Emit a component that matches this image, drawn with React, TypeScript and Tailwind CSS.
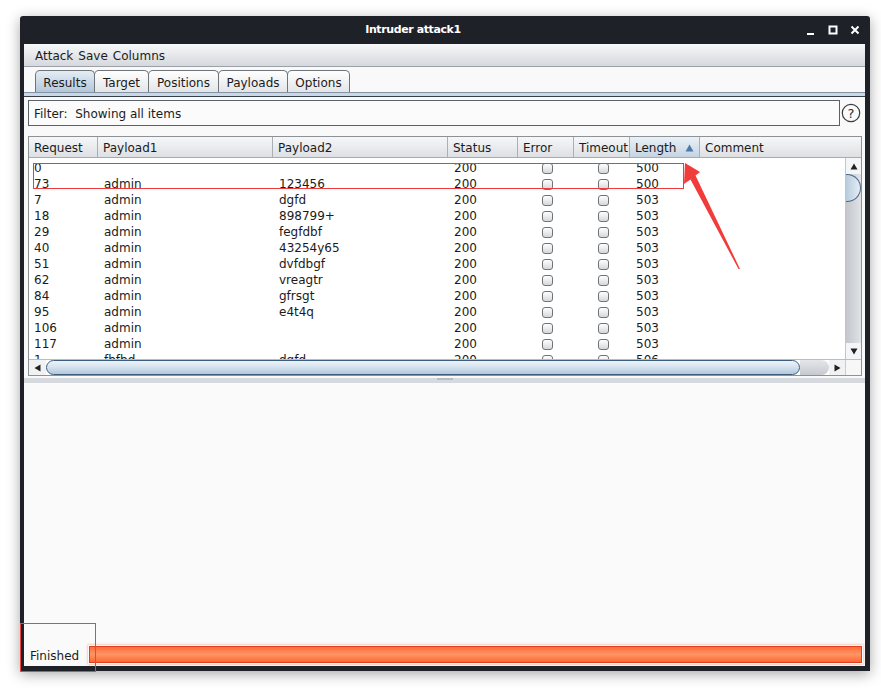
import React from "react";

const rows: [string, string, string, string, string][] = [
  ["0", "", "", "200", "500"],
  ["73", "admin", "123456", "200", "500"],
  ["7", "admin", "dgfd", "200", "503"],
  ["18", "admin", "898799+", "200", "503"],
  ["29", "admin", "fegfdbf", "200", "503"],
  ["40", "admin", "43254y65", "200", "503"],
  ["51", "admin", "dvfdbgf", "200", "503"],
  ["62", "admin", "vreagtr", "200", "503"],
  ["84", "admin", "gfrsgt", "200", "503"],
  ["95", "admin", "e4t4q", "200", "503"],
  ["106", "admin", "", "200", "503"],
  ["117", "admin", "", "200", "503"],
  ["1", "fbfbd", "dgfd", "200", "506"],
];

const tabs = [
  { label: "Results", w: "w-[60px]", active: true },
  { label: "Target", w: "w-[55px]" },
  { label: "Positions", w: "w-[71px]" },
  { label: "Payloads", w: "w-[70px]" },
  { label: "Options", w: "w-[63px]" },
];

function Check() {
  return (
    <span className="block h-[11px] w-[11px] rounded-[3px] border border-[#6f737a] bg-gradient-to-b from-white to-[#d5d8dc]" />
  );
}

export default function App() {
  return (
    <div className="relative h-[688px] w-[881px] overflow-hidden bg-white font-['DejaVu_Sans',sans-serif] text-[12px] text-[#1b1b1b]">
      <div className="pl-[20px] pt-[16px]">
        <div className="flex h-[655px] w-[850px] flex-col rounded-t-[3px] bg-[#1f2129] shadow-[0_3px_14px_rgba(0,0,0,0.35)]">
          {/* title bar */}
          <div className="flex h-[28px] items-center">
            <div className="flex-1 pt-[1px] text-center text-[11px] font-bold tracking-[-0.4px] text-white">Intruder attack1</div>
            <div className="flex items-center gap-[12px] pr-[10px] text-white">
              <svg width="10" height="10" viewBox="0 0 10 10"><rect x="1" y="8" width="7" height="2" fill="white" /></svg>
              <svg width="10" height="10" viewBox="0 0 10 10"><rect x="1.5" y="1.5" width="7" height="7" fill="none" stroke="white" strokeWidth="2" /></svg>
              <svg width="10" height="10" viewBox="0 0 10 10"><path d="M1.5 1.5L8.5 8.5M8.5 1.5L1.5 8.5" stroke="white" strokeWidth="2" /></svg>
            </div>
          </div>

          {/* client area */}
          <div className="mb-[5px] ml-[4px] mr-[5px] flex flex-1 flex-col bg-[#f9f9f9]">
            {/* menu */}
            <div className="flex h-[23px] items-center gap-[5px] border-b border-[#9ca1a8] bg-gradient-to-b from-[#f7f8f9] to-[#d5d8dd] pl-[11px] pt-[2px]">
              <span>Attack</span>
              <span>Save</span>
              <span>Columns</span>
            </div>

            {/* tabs */}
            <div className="flex bg-[#f9f9f9] pl-[11px] pt-[3px]">
              {tabs.map((t, i) => (
                <div
                  key={t.label}
                  className={`${t.w} ${i > 0 ? "-ml-px" : ""} flex h-[22px] items-center justify-center rounded-t-[5px] border border-b-0 border-[#6f747b] pt-[2px] ${
                    t.active ? "bg-gradient-to-b from-[#e4edf5] to-[#b3c7da]" : "bg-gradient-to-b from-white to-[#e3e5e8]"
                  }`}
                >
                  {t.label}
                </div>
              ))}
            </div>
            <div className="h-[5px] border-b border-t border-b-[#363e48] border-t-[#8592a0] bg-[#c8d8e8]" />

            {/* filter */}
            <div className="mt-[3px] flex items-center pl-[4px] pr-[3px]">
              <div className="flex h-[26px] w-[812px] items-center border border-[#5c6067] bg-[#fbfbfb] pl-[5px] pt-[2px]">
                Filter:&nbsp; Showing all items
              </div>
              <div className="flex flex-1 justify-center">
                <svg width="20" height="20" viewBox="0 0 20 20">
                  <circle cx="10" cy="10" r="8.7" fill="#fbfbfb" stroke="#3a3d42" strokeWidth="1.2" />
                  <text x="10" y="14.5" textAnchor="middle" fontSize="13" fontFamily="DejaVu Sans" fill="#2a2c30">?</text>
                </svg>
              </div>
            </div>

            {/* table */}
            <div className="ml-[4px] mt-[10px] w-[834px] border border-[#8d9198] bg-white">
              <div className="flex h-[21px] border-b border-[#a5abb3] bg-gradient-to-b from-[#f6f7f8] to-[#dde0e4] pt-[2px]">
                {[
                  ["Request", "w-[69px]"],
                  ["Payload1", "w-[175px]"],
                  ["Payload2", "w-[175px]"],
                  ["Status", "w-[70px]"],
                  ["Error", "w-[56px]"],
                  ["Timeout", "w-[56px]"],
                ].map(([l, w]) => (
                  <div key={l} className={`${w} -mt-[2px] flex items-center border-r border-[#a9afb7] pl-[5px] pt-[2px]`}>{l}</div>
                ))}
                <div className="-mt-[2px] flex w-[70px] items-center justify-between border-r border-[#a9afb7] bg-gradient-to-b from-[#eaf1f7] to-[#c5d4e3] pl-[5px] pr-[5px] pt-[2px]">
                  <span>Length</span>
                  <svg width="9" height="8" viewBox="0 0 9 8"><path d="M4.5 0.5L8.5 7.5H0.5Z" fill="#4d7aa8" /></svg>
                </div>
                <div className="-mt-[2px] flex flex-1 items-center pl-[5px] pt-[2px]">Comment</div>
              </div>

              <div className="flex h-[201px]">
                <div className="flex-1 overflow-hidden pt-[2px]">
                  {rows.map((r, i) => (
                    <div key={i} className="flex h-[16px] items-center leading-[16px]">
                      <div className="w-[69px] pl-[5px]">{r[0]}</div>
                      <div className="w-[175px] pl-[6px]">{r[1]}</div>
                      <div className="w-[175px] pl-[6px]">{r[2]}</div>
                      <div className="w-[70px] pl-[6px]">{r[3]}</div>
                      <div className="flex w-[56px] justify-center pl-[2px]"><Check /></div>
                      <div className="flex w-[56px] justify-center pl-[2px]"><Check /></div>
                      <div className="w-[70px] pl-[6px]">{r[4]}</div>
                    </div>
                  ))}
                </div>
                {/* vertical scrollbar */}
                <div className="flex w-[16px] flex-col border-l border-[#c2c6cc] bg-gradient-to-r from-[#c2c6cc] to-[#e2e4e8]">
                  <div className="flex h-[16px] items-center justify-center bg-[#f4f5f6]">
                    <svg width="8" height="7" viewBox="0 0 8 7"><path d="M4 0.5L7.5 6.5H0.5Z" fill="#222" /></svg>
                  </div>
                  <div className="h-[28px] rounded-r-[14px] border border-l-0 border-[#4a6888] bg-gradient-to-r from-[#b8cbde] to-[#e6eef6]" />
                  <div className="flex-1 rounded-br-[8px] bg-gradient-to-r from-[#c3c7cd] to-[#dfe2e6]" />
                  <div className="flex h-[16px] items-center justify-center bg-[#f4f5f6]">
                    <svg width="8" height="7" viewBox="0 0 8 7"><path d="M0.5 0.5H7.5L4 6.5Z" fill="#222" /></svg>
                  </div>
                </div>
              </div>

              {/* horizontal scrollbar */}
              <div className="flex h-[16px] border-t border-[#b9bec5]">
                <div className="flex w-[17px] items-center justify-center bg-[#f1f2f4]">
                  <svg width="7" height="8" viewBox="0 0 7 8"><path d="M0.5 4L6.5 0.5V7.5Z" fill="#222" /></svg>
                </div>
                <div className="w-[754px] rounded-[10px] border border-[#3f5d7c] bg-gradient-to-b from-[#eef4f9] via-[#d3e1ee] to-[#b3c8dc]" />
                <div className="flex-1 rounded-r-[8px] bg-gradient-to-b from-[#e4e6e9] to-[#c6cad0]" />
                <div className="flex w-[16px] items-center justify-center bg-[#f1f2f4]">
                  <svg width="7" height="8" viewBox="0 0 7 8"><path d="M6.5 4L0.5 0.5V7.5Z" fill="#222" /></svg>
                </div>
                <div className="w-[16px] border-l border-[#c9cdd2] bg-[#f7f7f7]" />
              </div>
            </div>

            {/* split divider */}
            <div className="mt-[2px] flex h-[5px] justify-center bg-[#d6d9de]">
              <div className="h-[2px] w-[16px] bg-[#b8bcc2]" />
            </div>

            <div className="flex-1 bg-[#fafafa]" />

            {/* status */}
            <div className="mb-[2px] flex h-[19px] items-center bg-[#fafafa]">
              <div className="w-[64px] pl-[6px] pt-[2px]">Finished</div>
              <div className="mr-[2px] h-[19px] flex-1 rounded-[1px] p-[1px] shadow-[0_0_2px_1px_rgba(255,120,90,0.35)]">
                <div className="h-full border border-[#e0401f] bg-gradient-to-b from-[#ff6c38] via-[#ff9464] to-[#ff6630]" />
              </div>
            </div>
          </div>
        </div>
      </div>

      {/* annotations */}
      <div className="pointer-events-none absolute left-[33px] top-[163px] h-[26px] w-[651px] border border-[#ee3b3b]" />
      <div className="pointer-events-none absolute left-[20px] top-[623px] h-[49px] w-[76px] border border-[#e84545]" />
      <svg className="pointer-events-none absolute left-0 top-0" width="881" height="688" viewBox="0 0 881 688">
        <polygon points="685,163 700,172 695.5,175.5 740,269 738.5,269 690.5,179.5 684,184" fill="#f23b3b" />
      </svg>
    </div>
  );
}
